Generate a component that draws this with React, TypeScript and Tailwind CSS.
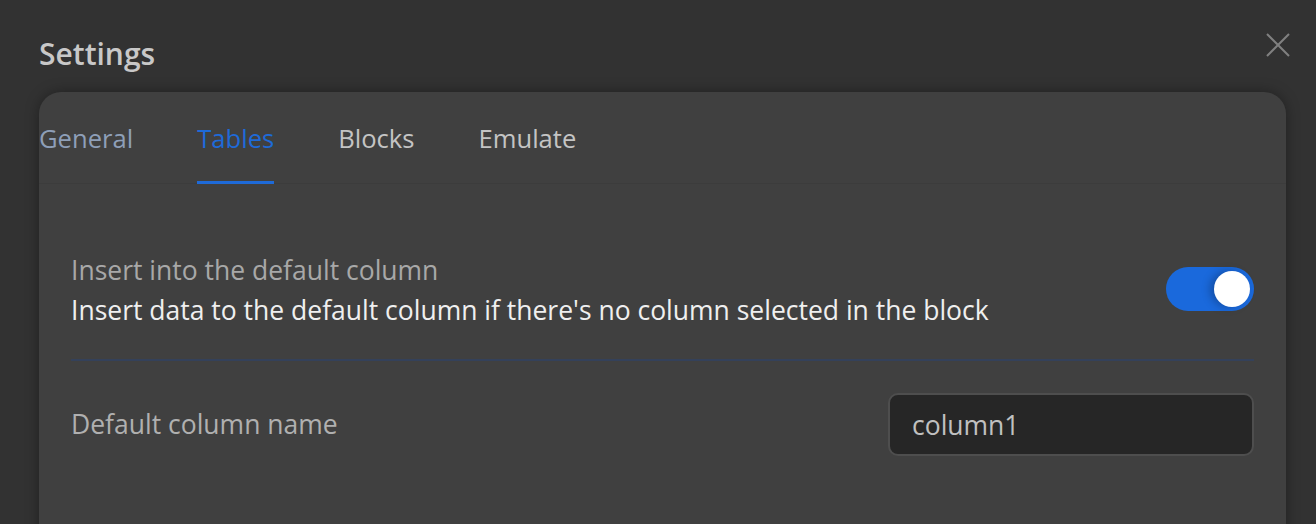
import { useState } from 'react';

const tabs = ['General', 'Tables', 'Blocks', 'Emulate'];

export default function App() {
  const [active, setActive] = useState('Tables');
  const [insertDefault, setInsertDefault] = useState(true);

  return (
    <div className="h-[524px] w-[1316px] overflow-hidden bg-[#323232] font-['Open_Sans',sans-serif]">
      <div className="flex items-start justify-between pl-[39px] pr-[24px] pt-[34px]">
        <h1 className="text-[30px] font-semibold leading-[40px] text-[#c8c8c8]">Settings</h1>
        <button className="mt-[-3px] text-[#808080]" aria-label="Close">
          <svg width="28" height="28" viewBox="0 0 28 28" fill="none" stroke="currentColor" strokeWidth="2">
            <path d="M3 3 L25 25 M25 3 L3 25" />
          </svg>
        </button>
      </div>

      <div className="ml-[39px] mr-[30px] mt-[18px] h-[600px] rounded-t-[22px] bg-[#404040] shadow-[0_0_14px_rgba(0,0,0,0.35)]">
        {/* tabs */}
        <div className="flex gap-[64px] border-b border-[#3c3c3c]">
          {tabs.map(t => (
            <button
              key={t}
              onClick={() => setActive(t)}
              className={`relative h-[91px] pt-[4px] text-[25.6px] ${
                t === active ? 'text-[#1e6ad8]' : t === 'General' ? 'text-[#8e9fb8]' : 'text-[#c4c4c4]'
              }`}
            >
              {t}
              {t === active && <span className="absolute bottom-[-1px] left-0 right-0 h-[3px] bg-[#1e6ad8]" />}
            </button>
          ))}
        </div>

        <div className="px-[32px] pt-[66px]">
          {/* row 1 */}
          <div className="flex items-start justify-between border-b-2 border-[#34415a] pb-[29px]">
            <div>
              <p className="text-[26.5px] leading-[40px] text-[#a8a8a8]">Insert into the default column</p>
              <p className="text-[26.5px] leading-[40px] text-[#efefef]">
                Insert data to the default column if there's no column selected in the block
              </p>
            </div>
            <button
              onClick={() => setInsertDefault(v => !v)}
              className={`mt-[17px] flex h-[44px] w-[88px] items-center rounded-full px-[4px] ${
                insertDefault ? 'justify-end bg-[#1a69dc]' : 'justify-start bg-[#666]'
              }`}
            >
              <span className="h-[36px] w-[36px] rounded-full bg-white shadow-[-4px_0_8px_rgba(0,0,0,0.25)]" />
            </button>
          </div>

          {/* row 2 */}
          <div className="flex items-center justify-between pt-[32px]">
            <p className="text-[26.5px] text-[#b0b0b0]">Default column name</p>
            <input
              defaultValue="column1"
              className="h-[63px] w-[366px] rounded-[10px] border-2 border-[#4e4e4e] bg-[#262626] px-[22px] text-[26.5px] text-[#c0c0c0] outline-none"
            />
          </div>
        </div>
      </div>
    </div>
  );
}
